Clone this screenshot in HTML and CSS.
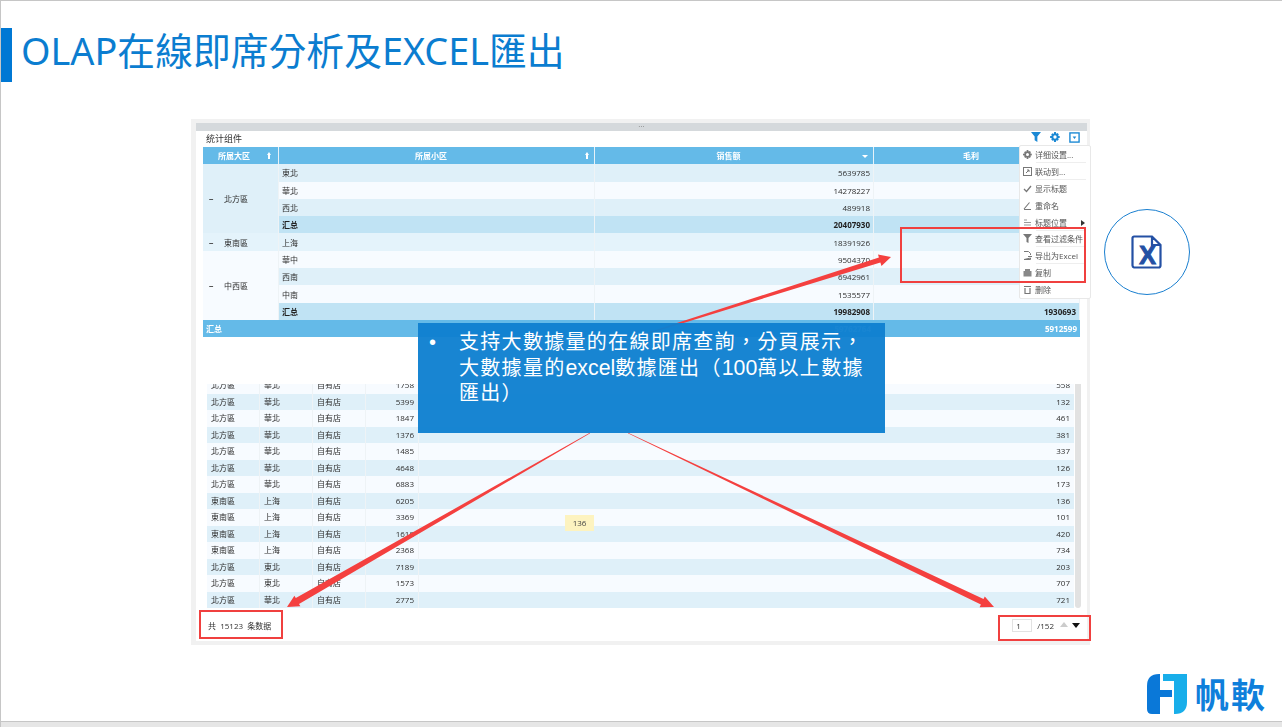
FILE: index.html
```html
<!DOCTYPE html>
<html lang="zh-Hant">
  <head>
    <meta charset="UTF-8" />
    <meta name="viewport" content="width=device-width, initial-scale=1.0" />
    <title>OLAP在線即席分析及EXCEL匯出</title>
    <link rel="stylesheet" href="styles.css">
  </head>
  <body>
    <div class="slide">
      <div class="title-mark"></div>
      <h1 class="title">OLAP在線即席分析及EXCEL匯出</h1>

      <div class="shot">
        <div class="drag-bar">···</div>
        <div class="panel">
          <div class="widget-head">
            <span>统计组件</span>
            <div class="widget-tools">
              <svg width="10" height="10" viewBox="0 0 11 11"><path d="M0 0H11L7 5V11L4 9V5Z" fill="#1a88d4"/></svg>
              <svg width="10" height="10" viewBox="0 0 24 24"><path d="M10 0h4l1 4 3-1.500 3 3L19.500 9l4 1v4l-4 1 1.500 3-3 3-3-1.500-1 4.500h-4l-1-4.500L6 21l-3-3 1.500-3-4.500-1v-4l4.500-1L3 6l3-3 3 1.500zM12 8a4 4 0 1 0 0 8 4 4 0 0 0 0-8z" fill="#1a88d4"/></svg>
              <svg width="11" height="11" viewBox="0 0 12 12"><rect x="1" y="1" width="10" height="10" fill="#fff" stroke="#1a88d4" stroke-width="1.500"/><path d="M4 5H8L6 7.500Z" fill="#1a88d4"/></svg>
            </div>
          </div>

          <div class="pivot">
            <div class="hd">所属大区<i class="up first"></i></div>
            <div class="hd">所属小区<i class="up"></i></div>
            <div class="hd">销售额<i class="down"></i></div>
            <div class="hd">毛利</div>

            <div class="area span4 c-a"><b>−</b>北方區</div>
            <div class="c-a">東北</div><div class="c-a num">5639785</div><div class="c-a num"></div>
            <div class="c-b">華北</div><div class="c-b num">14278227</div><div class="c-b num"></div>
            <div class="c-a">西北</div><div class="c-a num">489918</div><div class="c-a num"></div>
            <div class="c-t bold">汇总</div><div class="c-t num bold">20407930</div><div class="c-t num"></div>

            <div class="area c-s"><b>−</b>東南區</div>
            <div class="c-s">上海</div><div class="c-s num">18391926</div><div class="c-s num"></div>

            <div class="area span4 c-b"><b>−</b>中西區</div>
            <div class="c-b">華中</div><div class="c-b num">9504370</div><div class="c-b num"></div>
            <div class="c-a">西南</div><div class="c-a num">6942961</div><div class="c-a num"></div>
            <div class="c-b">中南</div><div class="c-b num">1535577</div><div class="c-b num"></div>
            <div class="c-t bold">汇总</div><div class="c-t num bold">19982908</div><div class="c-t num bold">1930693</div>

            <div class="grand span2">汇总</div><div class="grand num">59762764</div><div class="grand num">5912599</div>
          </div>

          <div class="detail-wrap">
            <div class="detail">
              <div class="row"><span>北方區</span><span>華北</span><span>自有店</span><span class="num">1758</span><span class="num">558</span></div>
              <div class="row"><span>北方區</span><span>華北</span><span>自有店</span><span class="num">5399</span><span class="num">132</span></div>
              <div class="row"><span>北方區</span><span>華北</span><span>自有店</span><span class="num">1847</span><span class="num">461</span></div>
              <div class="row"><span>北方區</span><span>華北</span><span>自有店</span><span class="num">1376</span><span class="num">381</span></div>
              <div class="row"><span>北方區</span><span>華北</span><span>自有店</span><span class="num">1485</span><span class="num">337</span></div>
              <div class="row"><span>北方區</span><span>華北</span><span>自有店</span><span class="num">4648</span><span class="num">126</span></div>
              <div class="row"><span>北方區</span><span>華北</span><span>自有店</span><span class="num">6883</span><span class="num">173</span></div>
              <div class="row"><span>東南區</span><span>上海</span><span>自有店</span><span class="num">6205</span><span class="num">136</span></div>
              <div class="row"><span>東南區</span><span>上海</span><span>自有店</span><span class="num">3369</span><span class="num">101</span></div>
              <div class="row"><span>東南區</span><span>上海</span><span>自有店</span><span class="num">1618</span><span class="num">420</span></div>
              <div class="row"><span>東南區</span><span>上海</span><span>自有店</span><span class="num">2368</span><span class="num">734</span></div>
              <div class="row"><span>北方區</span><span>東北</span><span>自有店</span><span class="num">7189</span><span class="num">203</span></div>
              <div class="row"><span>北方區</span><span>東北</span><span>自有店</span><span class="num">1573</span><span class="num">707</span></div>
              <div class="row"><span>北方區</span><span>華北</span><span>自有店</span><span class="num">2775</span><span class="num">721</span></div>
            </div>
            <div class="scrollbar"></div>
          </div>

          <div class="pager-row">
            <span>共&nbsp; 15123&nbsp; 条数据</span>
            <div class="pager">
              <span class="page-input">1</span>
              <span>/152</span>
              <i class="tri tri-up"></i>
              <i class="tri tri-down"></i>
            </div>
          </div>
        </div>

        <div class="cell-tip">136</div>

        <ul class="menu">
          <li class="line">
            <svg width="9" height="9" viewBox="0 0 24 24"><path d="M10 0h4l1 4 3-1.500 3 3L19.500 9l4 1v4l-4 1 1.500 3-3 3-3-1.500-1 4.500h-4l-1-4.500L6 21l-3-3 1.500-3-4.500-1v-4l4.500-1L3 6l3-3 3 1.500zM12 8a4 4 0 1 0 0 8 4 4 0 0 0 0-8z" fill="#777"/></svg>详细设置...</li>
          <li class="line">
            <svg width="9" height="9" viewBox="0 0 9 9"><rect x=".5" y=".5" width="8" height="8" fill="none" stroke="#777"/><path d="M3 6L6 3M4 3H6V5" fill="none" stroke="#777"/></svg>联动到...</li>
          <li>
            <svg width="9" height="9" viewBox="0 0 9 9"><path d="M1 5L3.500 7.500L8 2" fill="none" stroke="#777" stroke-width="1.300"/></svg>显示标题</li>
          <li>
            <svg width="9" height="9" viewBox="0 0 9 9"><path d="M1 8L6.500 1.500M1 8.500H8" fill="none" stroke="#777" stroke-width="1.100"/></svg>重命名</li>
          <li class="line">
            <svg width="9" height="9" viewBox="0 0 9 9"><path d="M1 2H4M1 4.500H8M1 7H8" fill="none" stroke="#999"/></svg>标题位置<i class="more"></i></li>
          <li class="line">
            <svg width="9" height="9" viewBox="0 0 9 9"><path d="M0 0H9L5.500 4V9L3.500 8V4Z" fill="#777"/></svg>查看过滤条件</li>
          <li class="line">
            <svg width="9" height="9" viewBox="0 0 9 9"><path d="M1 .5H5.500L7.500 2.500V4M7.500 7V8.500H1Z" fill="none" stroke="#777"/><path d="M5 5.500H9" stroke="#777"/></svg>导出为Excel</li>
          <li>
            <svg width="9" height="9" viewBox="0 0 9 9"><path d="M2 1H7V3H8.500V8.500H.5V3H2Z" fill="#888"/></svg>复制</li>
          <li>
            <svg width="9" height="9" viewBox="0 0 9 9"><path d="M1 1.500H8M2 3V8.500H7V3" fill="none" stroke="#777" stroke-width="1.200"/></svg>删除</li>
        </ul>
      </div>

      <svg class="arrows" width="1282" height="727" viewBox="0 0 1282 727">
        <polygon points="620,342.400 880.400,262.400 881.500,266 891,257 878,254.600 878.900,257.600 619.900,341.600"/>
        <polygon points="590.200,433.300 299,603.900 300.400,606.200 287,607 294.400,595.800 295.800,598.100 589.800,432.700"/>
        <polygon points="628.100,432.700 983.500,599.100 984.800,596.400 994,607 979.600,607.200 980.900,604.500 627.900,433.300"/>
      </svg>

      <div class="mark mark-menu"></div>
      <div class="mark mark-total"></div>
      <div class="mark mark-pager"></div>

      <div class="callout">
        <span class="dot">•</span>
        <p>支持大數據量的在線即席查詢，分頁展示，<br>大數據量的<span class="latin">excel</span>數據匯出（<span class="latin">100</span>萬以上數據<br>匯出）</p>
      </div>

      <div class="excel-badge">
        <svg width="32" height="34" viewBox="0 0 32 34">
          <path d="M3 1.500H21L29.500 10V30.500A2 2 0 0 1 27.500 32.500H3A2 2 0 0 1 1.500 30.500V3A1.500 1.500 0 0 1 3 1.500ZM21 1.500V10H29.500" fill="#fff" stroke="#2450a4" stroke-width="2.200"/>
          <text x="16.500" y="28.500" text-anchor="middle" class="excel-x">X</text>
        </svg>
      </div>

      <div class="logo">
        <svg width="40" height="40" viewBox="0 0 40 40">
          <path d="M0 12Q0 0 12 0H13V16H25V23H13V40H5Q0 40 0 35Z" fill="#0a78d8"/>
          <path d="M16 0H40V28Q40 40 28 40H27V7H16Z" fill="#18aeea"/>
        </svg>
        <span>帆軟</span>
      </div>
    </div>
  </body>
</html>
```

FILE: styles.css
```css
* {
    box-sizing: border-box;
}

body {
    margin: 0;
    background: #fff;
}

.slide {
    position: relative;
    width: 1282px;
    height: 727px;
    overflow: hidden;
    background: #fff;
    border-top: 1px solid #c6c6c6;
    border-left: 1px solid #c6c6c6;
    font-family: "Open Sans", "Noto Sans CJK TC", sans-serif;
}

.slide::after {
    content: "";
    position: absolute;
    left: 0;
    right: 0;
    bottom: 0;
    height: 5px;
    background: #e6e6e6;
    border-top: 1px solid #c6c6c6;
}

.title-mark {
    position: absolute;
    left: 0;
    top: 27px;
    width: 11px;
    height: 54px;
    background: #0078d4;
}

.title {
    position: absolute;
    left: 20px;
    top: 24px;
    margin: 0;
    font-family: "Noto Sans", "Noto Sans CJK TC", sans-serif;
    font-size: 37.800px;
    line-height: 52px;
    font-weight: 400;
    color: #0b7dd0;
    white-space: nowrap;
}

/* pasted screenshot of the report */
.shot {
    position: absolute;
    left: 190px;
    top: 118px;
    width: 899px;
    height: 526px;
    padding: 4px 3px 4px 5px;
    background: #f1f1f1;
    font-size: 8px;
    color: #2e2e2e;
    filter: blur(0.35px);
}

.drag-bar {
    height: 8px;
    background: #d5d9dc;
    color: #777;
    font-size: 8px;
    line-height: 6px;
    text-align: center;
}

.panel {
    height: 510px;
    background: #fff;
}

.widget-head {
    display: flex;
    align-items: center;
    justify-content: space-between;
    height: 16px;
    padding: 0 7px 4px 10px;
    font-size: 9px;
    color: #333;
}

.widget-head > span {
    margin-top: 3px;
}

.widget-tools {
    display: flex;
    align-items: center;
    gap: 9px;
}

.pivot {
    display: grid;
    grid-template-columns: 76px 316px 279px 206px;
    grid-auto-rows: 17.3px;
    width: 877px;
    margin-left: 7px;
}

.pivot > div {
    position: relative;
    display: flex;
    align-items: center;
    padding: 0 3px;
    border-right: 1px solid #eef3f6;
    white-space: nowrap;
}

.pivot .hd {
    justify-content: center;
    padding-right: 14px;
    background: #64bae8;
    color: #fff;
    font-weight: 700;
    border-right-color: #e6f2f9;
}

.pivot .hd:first-child {
    padding-right: 16px;
}

.pivot .num {
    justify-content: flex-end;
}

.pivot .area {
    padding-left: 6px;
}

.area b {
    width: 15px;
    font-weight: 700;
    color: #333;
}

.span4 {
    grid-row: span 4;
}

.span2 {
    grid-column: span 2;
}

.c-a {
    background: #dff0f9;
}

.c-b {
    background: #f7fbff;
}

.c-s {
    background: #e4f3fb;
}

.c-t {
    background: #c0e3f4;
}

.bold {
    font-weight: 700;
    color: #222;
}

.pivot .grand {
    background: #64bae8;
    color: #fff;
    font-weight: 700;
    border-right: 0;
}

.up,
.down {
    position: absolute;
    top: 7px;
}

.up {
    right: 6px;
    width: 2px;
    height: 5px;
    background: #fff;
}

.up.first {
    right: 8px;
}

.up::before {
    content: "";
    position: absolute;
    left: -1px;
    top: -2px;
    border: 2px solid transparent;
    border-top: 0;
    border-bottom: 3px solid #fff;
}

.down {
    right: 5px;
    top: 8px;
    border: 3px solid transparent;
    border-bottom: 0;
    border-top: 3px solid #fff;
}

.detail-wrap {
    display: flex;
    gap: 1px;
    height: 224px;
    margin: 47px 0 0 11px;
}

.detail {
    display: flex;
    flex-direction: column;
    justify-content: flex-end;
    width: 867px;
    overflow: hidden;
}

.row {
    flex: none;
    display: grid;
    grid-template-columns: 53px 53px 53px 53px 1fr;
    height: 16.5px;
    line-height: 15.500px;
    background: #dff0f9;
}

.row:nth-child(odd) {
    background: #f7fbff;
}

.row span {
    padding: 0 4px;
    border-right: 1px solid #eef3f6;
    white-space: nowrap;
}

.row .num {
    text-align: right;
    border-right: 0;
}

.row span:nth-child(4) {
    border-right: 1px solid #eef3f6;
}

.scrollbar {
    width: 6px;
    background: #e2e2e2;
    border-radius: 0 0 3px 3px;
}

.pager-row {
    display: flex;
    align-items: center;
    justify-content: space-between;
    height: 33px;
    padding: 2px 7px 0 12px;
    color: #333;
}

.pager {
    display: flex;
    align-items: center;
    gap: 4px;
}

.page-input {
    width: 20px;
    height: 13px;
    margin-right: 1px;
    padding-left: 3px;
    border: 1px solid #e2e2e2;
    line-height: 11px;
}

.tri {
    width: 0;
    height: 0;
    border: 4px solid transparent;
}

.tri-up {
    margin-left: 2px;
    margin-top: -2px;
    border-top: 0;
    border-bottom: 5px solid #ccc;
}

.tri-down {
    margin-top: -1px;
    border-bottom: 0;
    border-top: 5px solid #111;
}

.cell-tip {
    position: absolute;
    left: 374px;
    top: 396px;
    width: 29px;
    height: 16px;
    background: #fdf3c0;
    line-height: 16px;
    text-align: center;
    color: #444;
}

.menu {
    position: absolute;
    left: 828px;
    top: 26px;
    width: 72px;
    height: 154px;
    margin: 0;
    padding: 0;
    list-style: none;
    background: #fff;
    border: 1px solid #e8e8e8;
    border-radius: 2px;
    color: #555;
}

.menu li {
    position: relative;
    display: flex;
    align-items: center;
    gap: 3px;
    height: 17px;
    margin-top: -0.100px;
    padding-left: 3px;
    white-space: nowrap;
}

.menu svg {
    flex: none;
}

.menu .line::after {
    content: "";
    position: absolute;
    left: 16px;
    right: 4px;
    bottom: 0;
    height: 1px;
    background: #eee;
}

.more {
    position: absolute;
    right: 5px;
    top: 6px;
    border: 3px solid transparent;
    border-right: 0;
    border-left: 4px solid #333;
}

.arrows {
    position: absolute;
    left: -1px;
    top: -1px;
}

.arrows polygon {
    fill: #f4403f;
}

.mark {
    position: absolute;
    border: 2px solid #f0403f;
}

.mark-menu {
    left: 899px;
    top: 226px;
    width: 186px;
    height: 56px;
}

.mark-total {
    left: 198px;
    top: 609px;
    width: 84px;
    height: 29px;
}

.mark-pager {
    left: 997px;
    top: 614px;
    width: 93px;
    height: 26px;
}

.callout {
    position: absolute;
    left: 417px;
    top: 322px;
    display: flex;
    width: 467px;
    height: 110px;
    padding: 7px 0 0 11px;
    background: rgba(15, 128, 208, 0.96);
    color: #fff;
    font-family: "Liberation Sans", "Noto Sans CJK TC", sans-serif;
    font-size: 20px;
    line-height: 25.500px;
}

.dot {
    width: 30px;
}

.callout p {
    margin: 0;
    letter-spacing: 1.300px;
    white-space: nowrap;
}

.callout .latin {
    font-size: 21.300px;
    letter-spacing: 0;
}

.excel-badge {
    position: absolute;
    left: 1103px;
    top: 208px;
    display: grid;
    place-items: center;
    width: 86px;
    height: 86px;
    border: 1px solid #1a7fd0;
    border-radius: 50%;
}

.excel-x {
    font-family: "Liberation Sans", sans-serif;
    font-size: 25px;
    font-weight: 700;
    fill: #2450a4;
    stroke: #2450a4;
    stroke-width: 1px;
}

.logo {
    position: absolute;
    left: 1146px;
    top: 673px;
    display: flex;
    align-items: center;
    gap: 8px;
    color: #0f7fdb;
    font-family: "Noto Sans CJK TC", sans-serif;
    font-size: 34px;
    font-weight: 700;
    line-height: 40px;
    letter-spacing: 2px;
}
```
